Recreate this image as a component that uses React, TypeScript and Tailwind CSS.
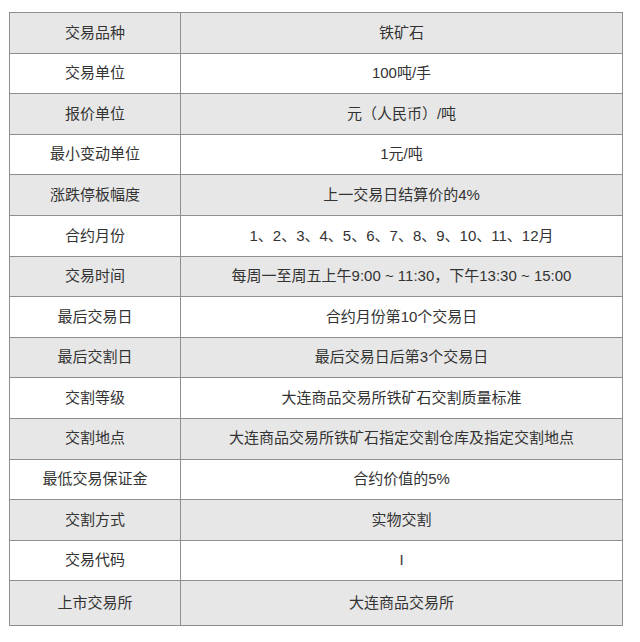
import React from "react";

const rows: [string, string][] = [
  ["交易品种", "铁矿石"],
  ["交易单位", "100吨/手"],
  ["报价单位", "元（人民币）/吨"],
  ["最小变动单位", "1元/吨"],
  ["涨跌停板幅度", "上一交易日结算价的4%"],
  ["合约月份", "1、2、3、4、5、6、7、8、9、10、11、12月"],
  ["交易时间", "每周一至周五上午9:00 ~ 11:30，下午13:30 ~ 15:00"],
  ["最后交易日", "合约月份第10个交易日"],
  ["最后交割日", "最后交易日后第3个交易日"],
  ["交割等级", "大连商品交易所铁矿石交割质量标准"],
  ["交割地点", "大连商品交易所铁矿石指定交割仓库及指定交割地点"],
  ["最低交易保证金", "合约价值的5%"],
  ["交割方式", "实物交割"],
  ["交易代码", "I"],
  ["上市交易所", "大连商品交易所"],
];

export default function App() {
  return (
    <div className="w-[640px] h-[642px] bg-white pt-[12px] pl-[9px]">
      <table
        className="w-[614px] border-collapse text-[15px] text-[#333]"
        style={{ fontFamily: '"Liberation Sans", "Noto Sans CJK SC", sans-serif' }}
      >
        <tbody>
          {rows.map(([k, v], i) => (
            <tr
              key={k}
              className={`${i % 2 === 0 ? "bg-[#e7e7e7]" : "bg-white"} ${
                i === rows.length - 1 ? "h-[45px]" : "h-[40.6px]"
              }`}
            >
              <td className="w-[171px] border-[1.5px] border-[#8f8f8f] text-center p-0">{k}</td>
              <td className="border-[1.5px] border-[#8f8f8f] text-center p-0">{v}</td>
            </tr>
          ))}
        </tbody>
      </table>
    </div>
  );
}
